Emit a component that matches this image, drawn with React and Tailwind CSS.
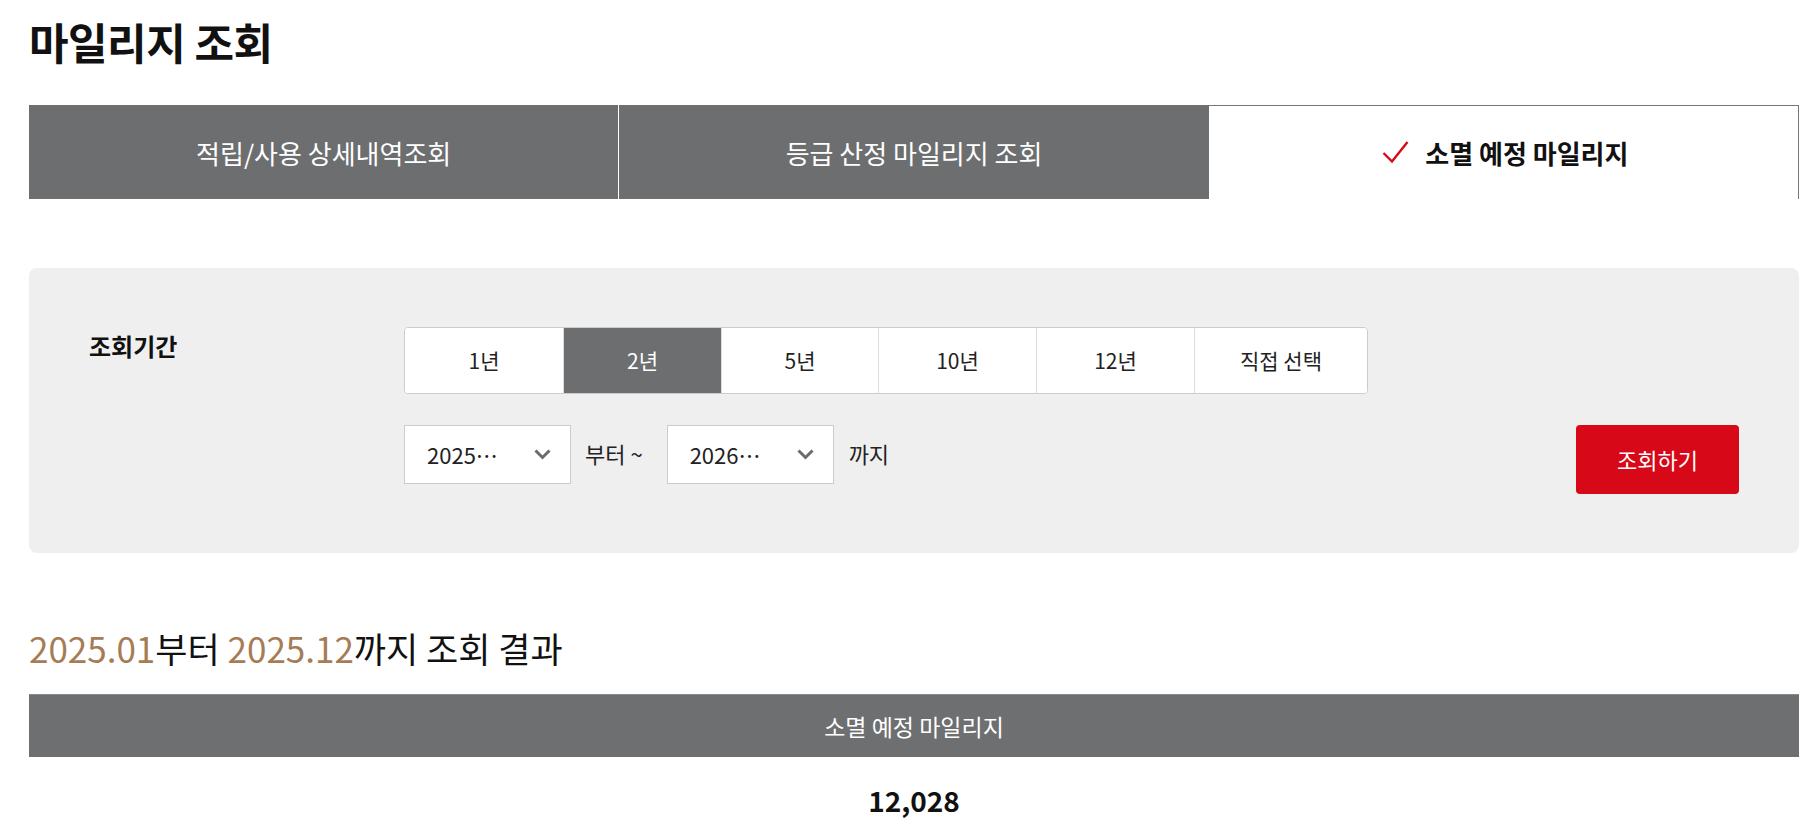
// Mileage lookup page - expiring mileage tab

import { useState } from 'react'

var tabs = ['적립/사용 상세내역조회', '등급 산정 마일리지 조회', '소멸 예정 마일리지']
var periods = [
  { label: '1년', w: 'w-[158px]' },
  { label: '2년', w: 'w-[158px]' },
  { label: '5년', w: 'w-[157px]' },
  { label: '10년', w: 'w-[158px]' },
  { label: '12년', w: 'w-[158px]' },
  { label: '직접 선택', w: 'w-[173px]' },
]

function Chevron() {
  return (
    <svg width="17" height="11" viewBox="0 0 17 11" fill="none">
      <path d="M1.5 1.5 L8.5 8.5 L15.5 1.5" stroke="#6b6b6b" strokeWidth="3" />
    </svg>
  )
}

function FakeSelect({ value }) {
  return (
    <div className="w-[167px] h-[59px] bg-white border border-[#cccccc] flex items-center justify-between pl-[22px] pr-[19px]">
      <span className="text-[22px] text-[#222]">{value}</span>
      <Chevron />
    </div>
  )
}

export default function App() {
  var [tab, setTab] = useState(2)
  var [period, setPeriod] = useState(1)

  return (
    <div className="bg-white min-h-screen pl-[29px] pr-[19px] pt-[11px] text-[#111]" style={{ fontFamily: '"Noto Sans CJK KR", "Noto Sans", sans-serif' }}>
      <h1 className="text-[43px] font-bold leading-[60px] tracking-[-0.5px]">마일리지 조회</h1>

      {/* tabs */}
      <div className="flex mt-[34px] h-[94px]">
        {tabs.map(function(t, i) {
          var active = i == tab
          return (
            <button
              key={t}
              onClick={() => setTab(i)}
              className={
                'flex-1 flex items-center justify-center text-[26px] ' +
                (active
                  ? 'bg-white border-t border-r border-[#777] font-bold text-[#111]'
                  : 'bg-[#6d6e70] text-white ' + (i > 0 ? 'border-l border-white' : ''))
              }
            >
              {active && (
                <svg width="27" height="25" viewBox="0 0 27 25" fill="none" className="mr-[16px] ml-[4px]">
                  <path d="M1.5 13 L10 21.5 L25.5 2" stroke="#d70a18" strokeWidth="2.4" />
                </svg>
              )}
              {t}
            </button>
          )
        })}
      </div>

      {/* search box */}
      <div className="mt-[69px] bg-[#efefef] rounded-lg pt-[59px] pb-[59px] pl-[60px] pr-[60px] flex">
        <div className="w-[315px] text-[24px] font-bold leading-[34px] pt-[2px]">조회기간</div>
        <div className="flex-1">
          <div className="flex">
            <div className="flex bg-white border border-[#cccccc] rounded-[4px] overflow-hidden h-[67px]">
              {periods.map(function(p, i) {
                var on = i == period
                return (
                  <button
                    key={p.label}
                    onClick={() => setPeriod(i)}
                    className={
                      p.w + ' flex items-center justify-center text-[21px] ' +
                      (i > 0 ? 'border-l border-[#dddddd] ' : '') +
                      (on ? 'bg-[#6d6e70] text-white' : 'bg-white text-[#222]')
                    }
                  >
                    {p.label}
                  </button>
                )
              })}
            </div>
          </div>
          <div className="flex items-start mt-[31px]">
            <FakeSelect value="2025…" />
            <span className="h-[57px] flex items-center ml-[14px] mr-[24px] text-[22px] text-[#222]">부터 ~</span>
            <FakeSelect value="2026…" />
            <span className="h-[57px] flex items-center ml-[15px] text-[22px] text-[#222]">까지</span>
            <button className="ml-auto w-[163px] h-[69px] bg-[#d70817] rounded-[4px] text-white text-[22px]">조회하기</button>
          </div>
        </div>
      </div>

      {/* result */}
      <h2 className="mt-[71px] text-[35px] leading-[48px] font-normal">
        <span className="text-[#a67c56]">2025.01</span>부터 <span className="text-[#a67c56]">2025.12</span>까지 조회 결과
      </h2>
      <div className="mt-[22px]">
        <div className="h-[63px] bg-[#6e6f71] border-t border-[#8a8a8e] flex items-center justify-center text-white text-[23px]">
          소멸 예정 마일리지
        </div>
        <div className="h-[86px] flex items-center justify-center text-[28px] font-bold">12,028</div>
      </div>
    </div>
  )
}
